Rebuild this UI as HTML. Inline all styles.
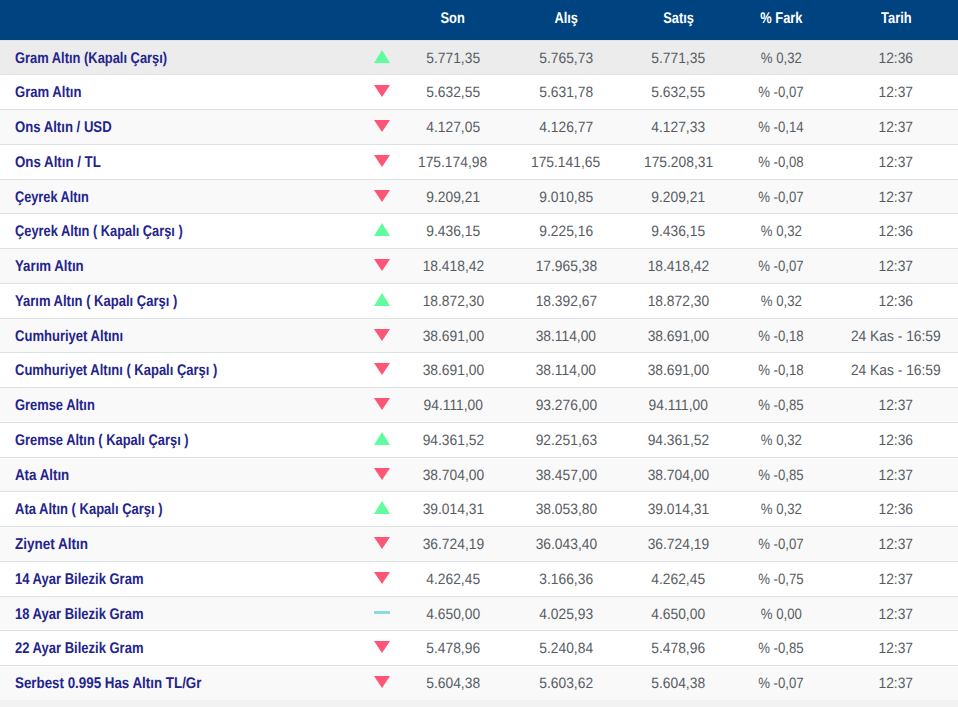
<!DOCTYPE html><html><head><meta charset="utf-8"><style>
html,body{margin:0;padding:0}
body{width:958px;height:707px;position:relative;overflow:hidden;background:#f2f2f2;font-family:"Liberation Sans",sans-serif;text-rendering:geometricPrecision}
.h{position:absolute;left:0;top:0;width:958px;height:40px;background:#004381}
.ht{position:absolute;top:11px;width:110px;text-align:center;color:#fff;font-weight:bold;font-size:15.5px;line-height:16px;white-space:nowrap}
.ht span,.c span,.n span{display:inline-block;transform-origin:50% 50%}
.ht span{transform:scaleX(0.83)}
.r{position:absolute;left:0;width:958px;border-bottom:1px solid #dde1e6}
.r0{background:#ececec;border-top:1px solid #dfe2e6}
.rw{background:#fff}
.rg{background:#f9f9f9}
.n{position:absolute;left:15px;color:#23238c;font-weight:bold;font-size:15.5px;line-height:16px;white-space:nowrap}
.n span{transform-origin:0 50%;transform:scaleX(0.832)}
.c{position:absolute;width:110px;text-align:center;color:#565b62;font-size:15px;line-height:16px;white-space:nowrap}
.c span{transform:scaleX(0.92)}
.up{position:absolute;left:374px;width:0;height:0;border-left:8px solid transparent;border-right:8px solid transparent;border-bottom:13px solid #60fd9f}
.dn{position:absolute;left:374px;width:0;height:0;border-left:8px solid transparent;border-right:8px solid transparent;border-top:12px solid #fe5475}
.fl{position:absolute;left:374px;width:16px;height:3px;background:#8dd8e3}
</style></head><body>
<div class="h"></div>
<div class="ht" style="left:398.0px"><span>Son</span></div>
<div class="ht" style="left:511.0px"><span>Alış</span></div>
<div class="ht" style="left:623.5px"><span>Satış</span></div>
<div class="ht" style="left:726.0px"><span>% Fark</span></div>
<div class="ht" style="left:841.0px"><span>Tarih</span></div>
<div class="r r0" style="top:40px;height:33px;"></div>
<div class="n" style="top:51px"><span style="transform:scaleX(0.832)">Gram Altın (Kapalı Çarşı)</span></div>
<div class="up" style="top:50px"></div>
<div class="c" style="left:398.0px;top:51px"><span style="transform:scaleX(0.9200)">5.771,35</span></div>
<div class="c" style="left:511.0px;top:51px"><span style="transform:scaleX(0.9200)">5.765,73</span></div>
<div class="c" style="left:623.5px;top:51px"><span style="transform:scaleX(0.9200)">5.771,35</span></div>
<div class="c" style="left:726.0px;top:51px"><span style="transform:scaleX(0.8786)">% 0,32</span></div>
<div class="c" style="left:841.0px;top:51px"><span style="transform:scaleX(0.9200)">12:36</span></div>
<div class="r rw" style="top:75px;height:34px;"></div>
<div class="n" style="top:85px"><span style="transform:scaleX(0.845)">Gram Altın</span></div>
<div class="dn" style="top:85px"></div>
<div class="c" style="left:398.0px;top:85px"><span style="transform:scaleX(0.9200)">5.632,55</span></div>
<div class="c" style="left:511.0px;top:85px"><span style="transform:scaleX(0.9200)">5.631,78</span></div>
<div class="c" style="left:623.5px;top:85px"><span style="transform:scaleX(0.9200)">5.632,55</span></div>
<div class="c" style="left:726.0px;top:85px"><span style="transform:scaleX(0.8786)">% -0,07</span></div>
<div class="c" style="left:841.0px;top:85px"><span style="transform:scaleX(0.9200)">12:37</span></div>
<div class="r rg" style="top:110px;height:34px;"></div>
<div class="n" style="top:120px"><span style="transform:scaleX(0.8479)">Ons Altın / USD</span></div>
<div class="dn" style="top:120px"></div>
<div class="c" style="left:398.0px;top:120px"><span style="transform:scaleX(0.9200)">4.127,05</span></div>
<div class="c" style="left:511.0px;top:120px"><span style="transform:scaleX(0.9200)">4.126,77</span></div>
<div class="c" style="left:623.5px;top:120px"><span style="transform:scaleX(0.9200)">4.127,33</span></div>
<div class="c" style="left:726.0px;top:120px"><span style="transform:scaleX(0.8786)">% -0,14</span></div>
<div class="c" style="left:841.0px;top:120px"><span style="transform:scaleX(0.9200)">12:37</span></div>
<div class="r rw" style="top:145px;height:34px;"></div>
<div class="n" style="top:155px"><span style="transform:scaleX(0.8571)">Ons Altın / TL</span></div>
<div class="dn" style="top:155px"></div>
<div class="c" style="left:398.0px;top:155px"><span style="transform:scaleX(0.9200)">175.174,98</span></div>
<div class="c" style="left:511.0px;top:155px"><span style="transform:scaleX(0.9200)">175.141,65</span></div>
<div class="c" style="left:623.5px;top:155px"><span style="transform:scaleX(0.9200)">175.208,31</span></div>
<div class="c" style="left:726.0px;top:155px"><span style="transform:scaleX(0.8786)">% -0,08</span></div>
<div class="c" style="left:841.0px;top:155px"><span style="transform:scaleX(0.9200)">12:37</span></div>
<div class="r rg" style="top:180px;height:33px;"></div>
<div class="n" style="top:190px"><span style="transform:scaleX(0.8219)">Çeyrek Altın</span></div>
<div class="dn" style="top:190px"></div>
<div class="c" style="left:398.0px;top:190px"><span style="transform:scaleX(0.9200)">9.209,21</span></div>
<div class="c" style="left:511.0px;top:190px"><span style="transform:scaleX(0.9200)">9.010,85</span></div>
<div class="c" style="left:623.5px;top:190px"><span style="transform:scaleX(0.9200)">9.209,21</span></div>
<div class="c" style="left:726.0px;top:190px"><span style="transform:scaleX(0.8786)">% -0,07</span></div>
<div class="c" style="left:841.0px;top:190px"><span style="transform:scaleX(0.9200)">12:37</span></div>
<div class="r rw" style="top:214px;height:34px;"></div>
<div class="n" style="top:224px"><span style="transform:scaleX(0.8275)">Çeyrek Altın ( Kapalı Çarşı )</span></div>
<div class="up" style="top:223px"></div>
<div class="c" style="left:398.0px;top:224px"><span style="transform:scaleX(0.9200)">9.436,15</span></div>
<div class="c" style="left:511.0px;top:224px"><span style="transform:scaleX(0.9200)">9.225,16</span></div>
<div class="c" style="left:623.5px;top:224px"><span style="transform:scaleX(0.9200)">9.436,15</span></div>
<div class="c" style="left:726.0px;top:224px"><span style="transform:scaleX(0.8786)">% 0,32</span></div>
<div class="c" style="left:841.0px;top:224px"><span style="transform:scaleX(0.9200)">12:36</span></div>
<div class="r rg" style="top:249px;height:34px;"></div>
<div class="n" style="top:259px"><span style="transform:scaleX(0.8547)">Yarım Altın</span></div>
<div class="dn" style="top:259px"></div>
<div class="c" style="left:398.0px;top:259px"><span style="transform:scaleX(0.9200)">18.418,42</span></div>
<div class="c" style="left:511.0px;top:259px"><span style="transform:scaleX(0.9200)">17.965,38</span></div>
<div class="c" style="left:623.5px;top:259px"><span style="transform:scaleX(0.9200)">18.418,42</span></div>
<div class="c" style="left:726.0px;top:259px"><span style="transform:scaleX(0.8786)">% -0,07</span></div>
<div class="c" style="left:841.0px;top:259px"><span style="transform:scaleX(0.9200)">12:37</span></div>
<div class="r rw" style="top:284px;height:34px;"></div>
<div class="n" style="top:294px"><span style="transform:scaleX(0.8398)">Yarım Altın ( Kapalı Çarşı )</span></div>
<div class="up" style="top:293px"></div>
<div class="c" style="left:398.0px;top:294px"><span style="transform:scaleX(0.9200)">18.872,30</span></div>
<div class="c" style="left:511.0px;top:294px"><span style="transform:scaleX(0.9200)">18.392,67</span></div>
<div class="c" style="left:623.5px;top:294px"><span style="transform:scaleX(0.9200)">18.872,30</span></div>
<div class="c" style="left:726.0px;top:294px"><span style="transform:scaleX(0.8786)">% 0,32</span></div>
<div class="c" style="left:841.0px;top:294px"><span style="transform:scaleX(0.9200)">12:36</span></div>
<div class="r rg" style="top:319px;height:33px;"></div>
<div class="n" style="top:329px"><span style="transform:scaleX(0.8414)">Cumhuriyet Altını</span></div>
<div class="dn" style="top:329px"></div>
<div class="c" style="left:398.0px;top:329px"><span style="transform:scaleX(0.9200)">38.691,00</span></div>
<div class="c" style="left:511.0px;top:329px"><span style="transform:scaleX(0.9200)">38.114,00</span></div>
<div class="c" style="left:623.5px;top:329px"><span style="transform:scaleX(0.9200)">38.691,00</span></div>
<div class="c" style="left:726.0px;top:329px"><span style="transform:scaleX(0.8786)">% -0,18</span></div>
<div class="c" style="left:841.0px;top:329px"><span style="transform:scaleX(0.9200)">24 Kas - 16:59</span></div>
<div class="r rw" style="top:353px;height:34px;"></div>
<div class="n" style="top:363px"><span style="transform:scaleX(0.8382)">Cumhuriyet Altını ( Kapalı Çarşı )</span></div>
<div class="dn" style="top:363px"></div>
<div class="c" style="left:398.0px;top:363px"><span style="transform:scaleX(0.9200)">38.691,00</span></div>
<div class="c" style="left:511.0px;top:363px"><span style="transform:scaleX(0.9200)">38.114,00</span></div>
<div class="c" style="left:623.5px;top:363px"><span style="transform:scaleX(0.9200)">38.691,00</span></div>
<div class="c" style="left:726.0px;top:363px"><span style="transform:scaleX(0.8786)">% -0,18</span></div>
<div class="c" style="left:841.0px;top:363px"><span style="transform:scaleX(0.9200)">24 Kas - 16:59</span></div>
<div class="r rg" style="top:388px;height:34px;"></div>
<div class="n" style="top:398px"><span style="transform:scaleX(0.832)">Gremse Altın</span></div>
<div class="dn" style="top:398px"></div>
<div class="c" style="left:398.0px;top:398px"><span style="transform:scaleX(0.9200)">94.111,00</span></div>
<div class="c" style="left:511.0px;top:398px"><span style="transform:scaleX(0.9200)">93.276,00</span></div>
<div class="c" style="left:623.5px;top:398px"><span style="transform:scaleX(0.9200)">94.111,00</span></div>
<div class="c" style="left:726.0px;top:398px"><span style="transform:scaleX(0.8786)">% -0,85</span></div>
<div class="c" style="left:841.0px;top:398px"><span style="transform:scaleX(0.9200)">12:37</span></div>
<div class="r rw" style="top:423px;height:34px;"></div>
<div class="n" style="top:433px"><span style="transform:scaleX(0.832)">Gremse Altın ( Kapalı Çarşı )</span></div>
<div class="up" style="top:432px"></div>
<div class="c" style="left:398.0px;top:433px"><span style="transform:scaleX(0.9200)">94.361,52</span></div>
<div class="c" style="left:511.0px;top:433px"><span style="transform:scaleX(0.9200)">92.251,63</span></div>
<div class="c" style="left:623.5px;top:433px"><span style="transform:scaleX(0.9200)">94.361,52</span></div>
<div class="c" style="left:726.0px;top:433px"><span style="transform:scaleX(0.8786)">% 0,32</span></div>
<div class="c" style="left:841.0px;top:433px"><span style="transform:scaleX(0.9200)">12:36</span></div>
<div class="r rg" style="top:458px;height:33px;"></div>
<div class="n" style="top:468px"><span style="transform:scaleX(0.8592)">Ata Altın</span></div>
<div class="dn" style="top:468px"></div>
<div class="c" style="left:398.0px;top:468px"><span style="transform:scaleX(0.9200)">38.704,00</span></div>
<div class="c" style="left:511.0px;top:468px"><span style="transform:scaleX(0.9200)">38.457,00</span></div>
<div class="c" style="left:623.5px;top:468px"><span style="transform:scaleX(0.9200)">38.704,00</span></div>
<div class="c" style="left:726.0px;top:468px"><span style="transform:scaleX(0.8786)">% -0,85</span></div>
<div class="c" style="left:841.0px;top:468px"><span style="transform:scaleX(0.9200)">12:37</span></div>
<div class="r rw" style="top:492px;height:34px;"></div>
<div class="n" style="top:502px"><span style="transform:scaleX(0.8389)">Ata Altın ( Kapalı Çarşı )</span></div>
<div class="up" style="top:501px"></div>
<div class="c" style="left:398.0px;top:502px"><span style="transform:scaleX(0.9200)">39.014,31</span></div>
<div class="c" style="left:511.0px;top:502px"><span style="transform:scaleX(0.9200)">38.053,80</span></div>
<div class="c" style="left:623.5px;top:502px"><span style="transform:scaleX(0.9200)">39.014,31</span></div>
<div class="c" style="left:726.0px;top:502px"><span style="transform:scaleX(0.8786)">% 0,32</span></div>
<div class="c" style="left:841.0px;top:502px"><span style="transform:scaleX(0.9200)">12:36</span></div>
<div class="r rg" style="top:527px;height:34px;"></div>
<div class="n" style="top:537px"><span style="transform:scaleX(0.8706)">Ziynet Altın</span></div>
<div class="dn" style="top:537px"></div>
<div class="c" style="left:398.0px;top:537px"><span style="transform:scaleX(0.9200)">36.724,19</span></div>
<div class="c" style="left:511.0px;top:537px"><span style="transform:scaleX(0.9200)">36.043,40</span></div>
<div class="c" style="left:623.5px;top:537px"><span style="transform:scaleX(0.9200)">36.724,19</span></div>
<div class="c" style="left:726.0px;top:537px"><span style="transform:scaleX(0.8786)">% -0,07</span></div>
<div class="c" style="left:841.0px;top:537px"><span style="transform:scaleX(0.9200)">12:37</span></div>
<div class="r rw" style="top:562px;height:34px;"></div>
<div class="n" style="top:572px"><span style="transform:scaleX(0.8393)">14 Ayar Bilezik Gram</span></div>
<div class="dn" style="top:572px"></div>
<div class="c" style="left:398.0px;top:572px"><span style="transform:scaleX(0.9200)">4.262,45</span></div>
<div class="c" style="left:511.0px;top:572px"><span style="transform:scaleX(0.9200)">3.166,36</span></div>
<div class="c" style="left:623.5px;top:572px"><span style="transform:scaleX(0.9200)">4.262,45</span></div>
<div class="c" style="left:726.0px;top:572px"><span style="transform:scaleX(0.8786)">% -0,75</span></div>
<div class="c" style="left:841.0px;top:572px"><span style="transform:scaleX(0.9200)">12:37</span></div>
<div class="r rg" style="top:597px;height:33px;"></div>
<div class="n" style="top:607px"><span style="transform:scaleX(0.8393)">18 Ayar Bilezik Gram</span></div>
<div class="fl" style="top:611px"></div>
<div class="c" style="left:398.0px;top:607px"><span style="transform:scaleX(0.9200)">4.650,00</span></div>
<div class="c" style="left:511.0px;top:607px"><span style="transform:scaleX(0.9200)">4.025,93</span></div>
<div class="c" style="left:623.5px;top:607px"><span style="transform:scaleX(0.9200)">4.650,00</span></div>
<div class="c" style="left:726.0px;top:607px"><span style="transform:scaleX(0.8786)">% 0,00</span></div>
<div class="c" style="left:841.0px;top:607px"><span style="transform:scaleX(0.9200)">12:37</span></div>
<div class="r rw" style="top:631px;height:34px;"></div>
<div class="n" style="top:641px"><span style="transform:scaleX(0.8393)">22 Ayar Bilezik Gram</span></div>
<div class="dn" style="top:641px"></div>
<div class="c" style="left:398.0px;top:641px"><span style="transform:scaleX(0.9200)">5.478,96</span></div>
<div class="c" style="left:511.0px;top:641px"><span style="transform:scaleX(0.9200)">5.240,84</span></div>
<div class="c" style="left:623.5px;top:641px"><span style="transform:scaleX(0.9200)">5.478,96</span></div>
<div class="c" style="left:726.0px;top:641px"><span style="transform:scaleX(0.8786)">% -0,85</span></div>
<div class="c" style="left:841.0px;top:641px"><span style="transform:scaleX(0.9200)">12:37</span></div>
<div class="r rg" style="top:666px;height:34px;border-bottom:0;"></div>
<div class="n" style="top:676px"><span style="transform:scaleX(0.8611)">Serbest 0.995 Has Altın TL/Gr</span></div>
<div class="dn" style="top:676px"></div>
<div class="c" style="left:398.0px;top:676px"><span style="transform:scaleX(0.9200)">5.604,38</span></div>
<div class="c" style="left:511.0px;top:676px"><span style="transform:scaleX(0.9200)">5.603,62</span></div>
<div class="c" style="left:623.5px;top:676px"><span style="transform:scaleX(0.9200)">5.604,38</span></div>
<div class="c" style="left:726.0px;top:676px"><span style="transform:scaleX(0.8786)">% -0,07</span></div>
<div class="c" style="left:841.0px;top:676px"><span style="transform:scaleX(0.9200)">12:37</span></div>
</body></html>
